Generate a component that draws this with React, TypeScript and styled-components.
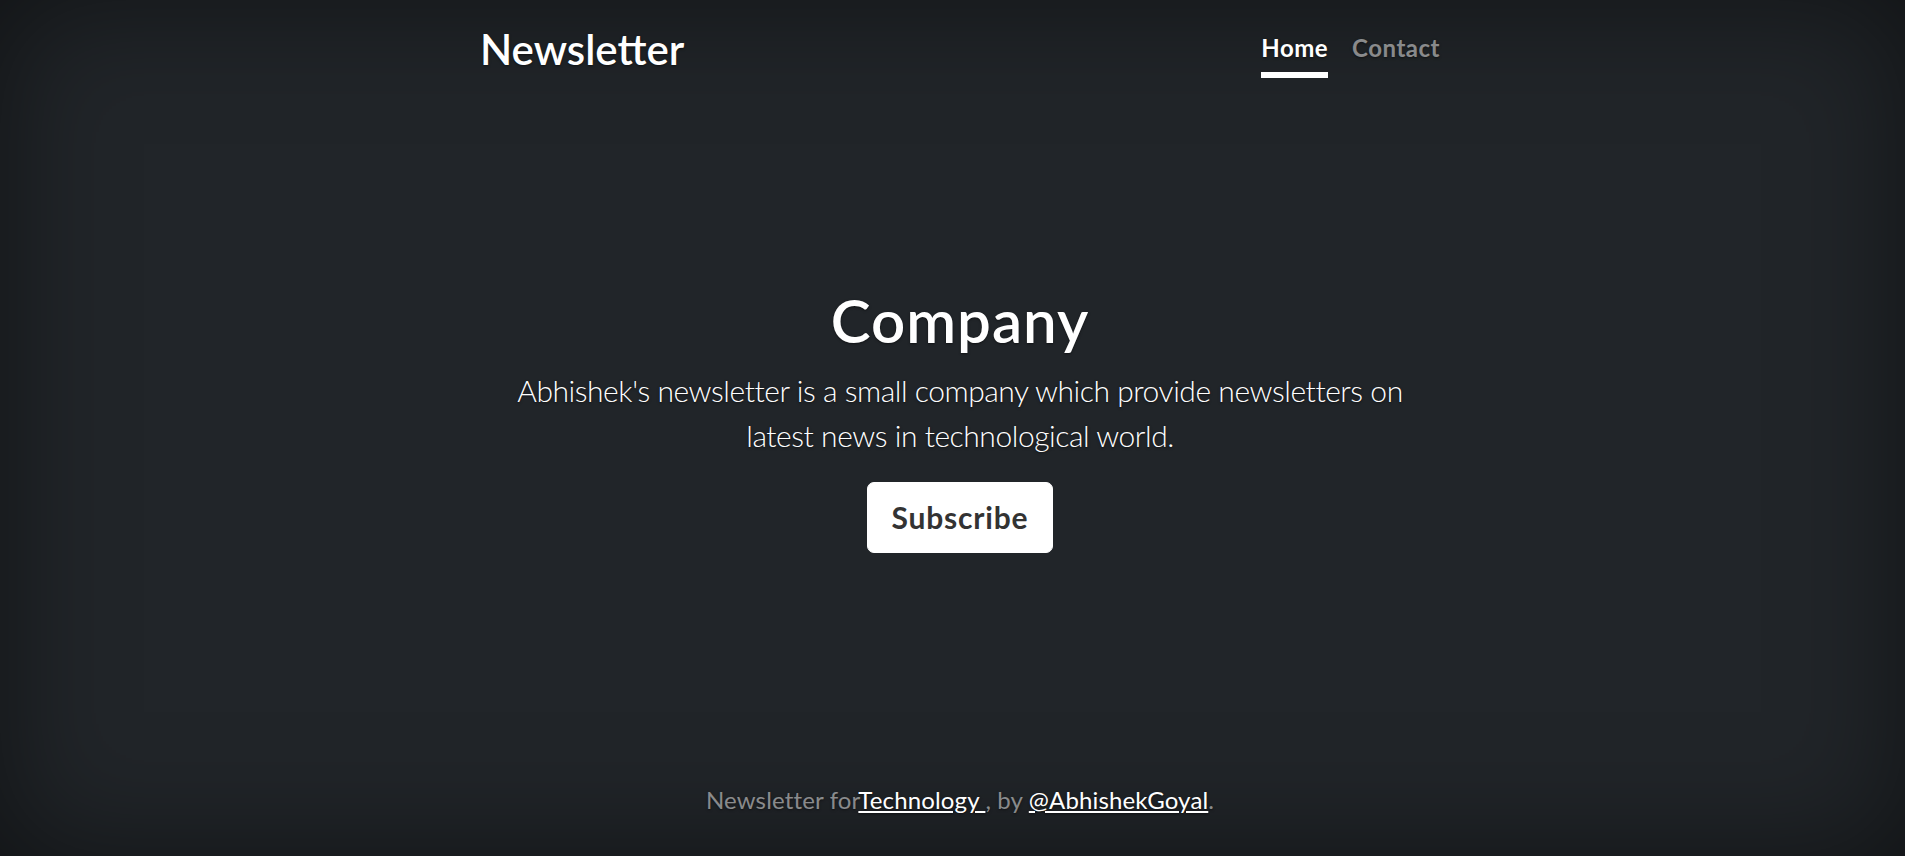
import React from "react";
import styled, { createGlobalStyle } from "styled-components";

const GlobalStyle = createGlobalStyle`
  html, body { height: 100%; }
  body {
    margin: 0;
    padding-left: 15px;
    box-sizing: border-box;
    background-color: #212529;
    color: #fff;
    font-family: "Lato", "Open Sans", sans-serif;
    text-shadow: 0 1.2px 2.4px rgba(0, 0, 0, 0.5);
    box-shadow: inset 0 0 120px rgba(0, 0, 0, 0.5);
  }
  #root { height: 100%; }
`;

const Cover = styled.div`
  display: flex;
  flex-direction: column;
  box-sizing: border-box;
  width: 100%;
  max-width: 1008px;
  height: 100%;
  margin: 0 auto;
  padding: 24px;
  text-align: center;
`;

const Header = styled.header`
  display: flex;
  justify-content: space-between;
  align-items: flex-start;
  margin-bottom: auto;
`;

const Brand = styled.h3`
  margin: 0;
  font-size: 42px;
  font-weight: 600;
  line-height: 51px;
  letter-spacing: 0;
`;

const Nav = styled.nav`
  display: flex;
  gap: 24px;
`;

const NavLink = styled.a<{ $active?: boolean }>`
  display: block;
  padding: 6px 0;
  font-size: 24px;
  font-weight: 700;
  line-height: 1.5;
  letter-spacing: 0.5px;
  text-decoration: none;
  color: ${(p) => (p.$active ? "#fff" : "rgba(255, 255, 255, 0.5)")};
  border-bottom: 6px solid ${(p) => (p.$active ? "#fff" : "transparent")};
  cursor: pointer;
`;

const Hero = styled.main`
  padding: 0 24px;
`;

const Title = styled.h1`
  margin: 0 0 12px;
  font-size: 60px;
  font-weight: 600;
  line-height: 1.2;
  letter-spacing: 1px;
`;

const Lead = styled.p`
  margin: 0 0 24px;
  font-size: 30px;
  font-weight: 300;
  line-height: 1.5;
  letter-spacing: -0.45px;
`;

const SubscribeButton = styled.a`
  display: inline-block;
  padding: 12px 24px;
  font-size: 30px;
  font-weight: 700;
  line-height: 1.5;
  letter-spacing: 0.8px;
  color: #333;
  background: #fff;
  border: 1px solid #fff;
  border-radius: 7px;
  text-decoration: none;
  text-shadow: none;
  cursor: pointer;
`;

const Footer = styled.footer`
  margin-top: auto;
  color: rgba(255, 255, 255, 0.5);
`;

const FooterText = styled.p`
  margin: 0 0 14px;
  font-size: 24px;
  line-height: 1.5;
  letter-spacing: 0.15px;
`;

const FooterLink = styled.a`
  color: #fff;
  text-decoration: underline;
  cursor: pointer;
`;

export default function App() {
  return (
    <>
      <GlobalStyle />
      <Cover>
        <Header>
          <Brand>Newsletter</Brand>
          <Nav>
            <NavLink $active>Home</NavLink>
            <NavLink>Contact</NavLink>
          </Nav>
        </Header>
        <Hero>
          <Title>Company</Title>
          <Lead>
            Abhishek's newsletter is a small company which provide newsletters on latest news in
            technological world.
          </Lead>
          <Lead>
            <SubscribeButton>Subscribe</SubscribeButton>
          </Lead>
        </Hero>
        <Footer>
          <FooterText>
            Newsletter for<FooterLink>Technology </FooterLink>, by{" "}
            <FooterLink>@AbhishekGoyal</FooterLink>.
          </FooterText>
        </Footer>
      </Cover>
    </>
  );
}
